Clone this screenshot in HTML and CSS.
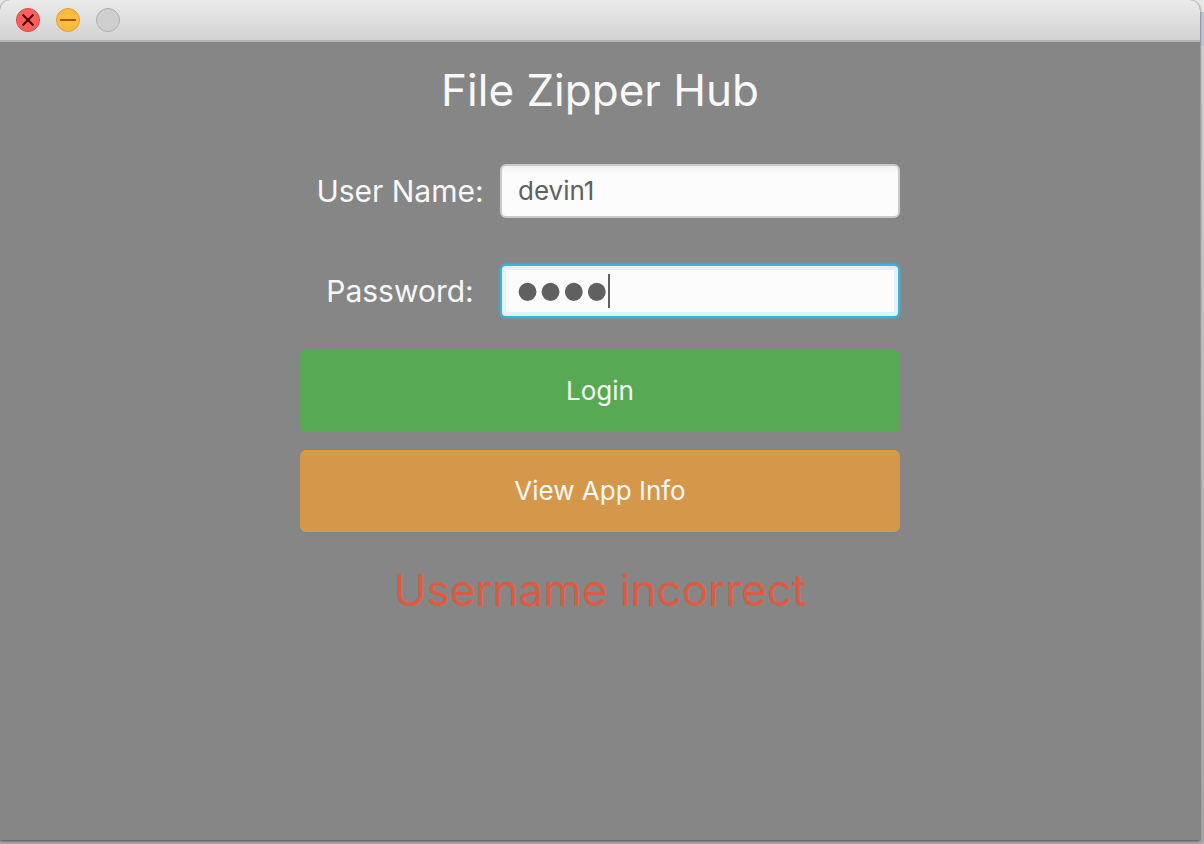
FILE: index.html
```html
<!DOCTYPE html>
<html lang="en">
<head>
<meta charset="utf-8">
<title>File Zipper Hub</title>
<link rel="stylesheet" href="styles.css">
</head>
<body>
<div class="window">
  <header class="titlebar">
    <button class="control" type="button" aria-label="Close">
      <svg viewBox="0 0 24 24"><circle cx="12" cy="12" r="11.5" fill="#fc605c" stroke="#de4643"/><path d="M6.5 6.5l11 11M17.500 6.500l-11 11" stroke="#4d0000" stroke-width="2"/></svg>
    </button>
    <button class="control" type="button" aria-label="Minimize">
      <svg viewBox="0 0 24 24"><circle cx="12" cy="12" r="11.500" fill="#fdbc40" stroke="#df9f35"/><path d="M4 12h16" stroke="#9a5a10" stroke-width="2"/></svg>
    </button>
    <button class="control" type="button" aria-label="Zoom" disabled>
      <svg viewBox="0 0 24 24"><circle cx="12" cy="12" r="11.500" fill="#cfcfcf" stroke="#aeaeae"/></svg>
    </button>
  </header>
  <main class="content">
    <h1 class="title">File Zipper Hub</h1>
    <form class="form">
      <div class="field">
        <label class="label" for="username">User Name:</label>
        <input class="input" id="username" type="text" value="devin1">
      </div>
      <div class="field">
        <label class="label" for="password">Password:</label>
        <div class="secret">
          <input class="input input-active" id="password" type="password" value="1234">
          <span class="caret"></span>
        </div>
      </div>
      <div class="actions">
        <button class="button login" type="button">Login</button>
        <button class="button info" type="button">View App Info</button>
      </div>
    </form>
    <p class="message" role="alert">Username incorrect</p>
  </main>
</div>
</body>
</html>
```
FILE: styles.css
```css
* { box-sizing: border-box; }

body {
  margin: 0;
  min-height: 100vh;
  display: flex;
  padding: 0 4px 4px 0;
  background: linear-gradient(to bottom, #e9e9e9 0 12px, #c4cad4 12px 46px, #d2d2d2 46px, #a9a9a9 100%);
  font-family: Inter, "Liberation Sans", sans-serif;
  color: #f8f8f8;
}

.window {
  flex: 1;
  display: flex;
  flex-direction: column;
  background: #868686;
  border-radius: 10px 10px 0 0;
  box-shadow: 0 1px 3px #444;
}

.titlebar {
  height: 42px;
  display: flex;
  align-items: center;
  gap: 16px;
  padding: 0 16px;
  background: linear-gradient(#ebebeb, #d2d2d2);
  border-bottom: 2px solid #b3b3b3;
  border-radius: 10px 10px 0 0;
}

.control {
  width: 24px;
  height: 24px;
  padding: 0;
  border: 0;
  background: none;
}

.control svg { display: block; }

.content {
  flex: 1;
  display: flex;
  flex-direction: column;
  align-items: center;
  padding-top: 18px;
}

.title, .message {
  margin: 0;
  font-size: 44px;
  font-weight: 400;
  line-height: 60px;
}

.form {
  width: 50%;
  margin: 44px 0 28px;
}

.field {
  display: grid;
  grid-template-columns: 1fr 2fr;
  align-items: center;
  margin-bottom: 46px;
}

.label {
  text-align: center;
  font-size: 30px;
}

.input {
  display: block;
  width: 100%;
  height: 54px;
  padding: 0 16px 2px;
  border: 2px solid #cacaca;
  border-radius: 6px;
  outline: 0;
  background: linear-gradient(#f0f0f0, #fcfcfc 8px);
  font: 26px Inter, "Liberation Sans", sans-serif;
  color: #606060;
}

.secret { position: relative; }

.input-active {
  padding: 0 14px;
  border-color: #3db2dc;
  background: #fcfcfc;
  box-shadow: 0 0 3px #3db2dc, inset 0 0 0 4px #e2f2f8;
  font: 66px "Liberation Sans", sans-serif;
}

.caret {
  position: absolute;
  left: 108px;
  top: 10px;
  width: 2px;
  height: 34px;
  background: #606060;
}

.actions {
  display: grid;
  gap: 18px;
  margin-top: -14px;
}

.button {
  height: 82px;
  padding: 0 0 2px;
  border: 0;
  border-radius: 6px;
  font: 26px Inter, "Liberation Sans", sans-serif;
  color: #f8f8f8;
}

.login { background: #57aa53; }
.info { background: #d5984a; }
.message { color: #dc5c43; }
```
